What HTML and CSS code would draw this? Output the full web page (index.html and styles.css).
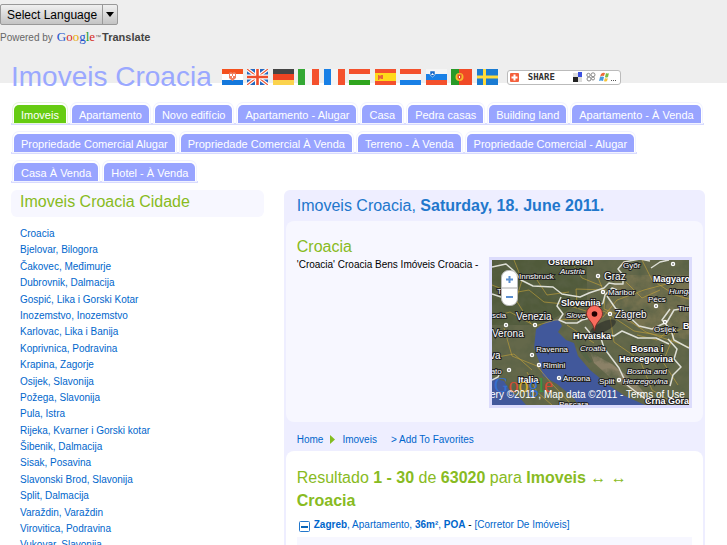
FILE: index.html
```html
<!DOCTYPE html>
<html lang="pt">
<head>
<meta charset="utf-8">
<title>Imoveis Croacia</title>
<link rel="stylesheet" href="styles.css">
</head>
<body>
<div class="translate">
  <button class="lang" type="button"><span class="lang-name">Select Language</span><span class="lang-arrow"><svg width="8" height="5" viewBox="0 0 8 5"><path d="M0 0h8L4 5z"/></svg></span></button>
  <div class="powered"><span>Powered by</span> <span class="google"><i class="gb">G</i><i class="gr">o</i><i class="gy">o</i><i class="gb">g</i><i class="gg">l</i><i class="gr">e</i></span><span class="tm">™</span><b>Translate</b></div>
</div>
<header class="masthead">
  <h1>Imoveis Croacia</h1>
  <div class="flags">
    <svg viewBox="0 0 21 16"><path fill="#fff" d="M0 0h21v16H0z"/><path fill="#f4511e" d="M0 0h21v5H0z"/><path fill="#1478dc" d="M0 11h21v5H0z"/><path fill="#f08060" d="M7 4l2-1 1.500 1L12 3l2 1v5l-3.500 3L7 9z"/><path fill="#fff" d="M8 5h2v2H8zm3 0h2v2h-2zM10 7h1v2h-1z"/></svg>
    <svg viewBox="0 0 21 16"><path fill="#2468c0" d="M0 0h21v16H0z"/><path stroke="#fff" stroke-width="3.500" d="M0 0l21 16M21 0L0 16"/><path stroke="#ee5a38" stroke-width="1.200" d="M0 0l21 16M21 0L0 16"/><path stroke="#fff" stroke-width="5" d="M10.500 0v16M0 8h21"/><path stroke="#ee4c2a" stroke-width="2.600" d="M10.500 0v16M0 8h21"/></svg>
    <svg viewBox="0 0 21 16"><path fill="#444" d="M0 0h21v5H0z"/><path fill="#ee4422" d="M0 5h21v6H0z"/><path fill="#fbd34d" d="M0 11h21v5H0z"/></svg>
    <svg viewBox="0 0 21 16"><path fill="#34a834" d="M0 0h7v16H0z"/><path fill="#f5f5f5" d="M7 0h7v16H7z"/><path fill="#f4512d" d="M14 0h7v16h-7z"/></svg>
    <svg viewBox="0 0 21 16"><path fill="#1980e6" d="M0 0h7v16H0z"/><path fill="#f5f5f5" d="M7 0h7v16H7z"/><path fill="#f4512d" d="M14 0h7v16h-7z"/></svg>
    <svg viewBox="0 0 21 16"><path fill="#f4512d" d="M0 0h21v5H0z"/><path fill="#f5f5f5" d="M0 5h21v6H0z"/><path fill="#2fa51e" d="M0 11h21v5H0z"/></svg>
    <svg viewBox="0 0 21 16"><path fill="#f4512d" d="M0 0h21v16H0z"/><path fill="#ffd91a" d="M0 4h21v8H0z"/><path fill="#e8643c" d="M3 6h1l1 1 1-1h2v4H6L5 9l-1 2H3z"/></svg>
    <svg viewBox="0 0 21 16"><path fill="#f4512d" d="M0 0h21v5H0z"/><path fill="#f5f5f5" d="M0 5h21v6H0z"/><path fill="#1980e6" d="M0 11h21v5H0z"/></svg>
    <svg viewBox="0 0 21 16"><path fill="#f5f5f5" d="M0 0h21v5H0z"/><path fill="#1980e6" d="M0 5h21v6H0z"/><path fill="#f4512d" d="M0 11h21v5H0z"/><path fill="#1668c8" stroke="#fff" stroke-width=".5" d="M4 2h5v4L6.500 8 4 6z"/><path fill="#fff" d="M5 6l1.500-2L8 6z"/></svg>
    <svg viewBox="0 0 21 16"><path fill="#289a28" d="M0 0h8v16H0z"/><path fill="#f04a26" d="M8 0h13v16H8z"/><circle cx="8.500" cy="8" r="4" fill="#f6bd2c"/><path fill="#e64a30" d="M6.500 5.500h4V9l-2 2-2-2z"/><path fill="#fff" d="M8 7h1v2H8z"/></svg>
    <svg viewBox="0 0 21 16"><path fill="#1a7bd2" d="M0 0h21v16H0z"/><path fill="#ffdb3c" d="M6 0h3v16H6z"/><path fill="#ffdb3c" d="M0 6.500h21v3H0z"/></svg>
  </div>
  <a class="share" href="#"><svg width="9" height="9" viewBox="0 0 9 9"><rect width="9" height="9" rx="1" fill="#f4603c"/><path stroke="#fff" stroke-width="2" d="M4.500 1.500v6M1.500 4.500h6"/></svg><span class="share-word">SHARE</span><svg width="44" height="10" viewBox="0 0 44 10"><path fill="#222" d="M0 5h5v5H0z"/><path fill="#ddd" d="M0 1h5v4H0zM5 5h4v5H5z"/><path fill="#3c50e0" d="M5 0h4v5H5z"/><g fill="none" stroke="#888"><circle cx="15.500" cy="3" r="1.700"/><circle cx="20" cy="2.800" r="2"/><circle cx="16" cy="7" r="2"/><circle cx="20" cy="6.500" r="1.500"/></g><path fill="#ee6a3a" d="M28 2q2-2 4-1l-1 3q-2-1-4 1z"/><path fill="#7dbc42" d="M33 1q2 1 3 0l-1 4q-2 1-3 0z"/><path fill="#469ade" d="M27 5q2-1 4 0l-1 4q-2-1-4 0z"/><path fill="#f4c33a" d="M32 6q2 1 3 0l-1 3q-2 1-3 0z"/><path fill="#555" d="M38 8h1v1h-1zm2 0h1v1h-1zm2 0h1v1h-1z"/></svg></a>
</header>
<nav class="tabs">
  <a class="on" href="#"><span>Imoveis</span></a>
  <a href="#"><span>Apartamento</span></a>
  <a href="#"><span>Novo edifício</span></a>
  <a href="#"><span>Apartamento - Alugar</span></a>
  <a href="#"><span>Casa</span></a>
  <a href="#"><span>Pedra casas</span></a>
  <a href="#"><span>Building land</span></a>
  <a href="#"><span>Apartamento - À Venda</span></a>
  <a href="#"><span>Propriedade Comercial Alugar</span></a>
  <a href="#"><span>Propriedade Comercial À Venda</span></a>
  <a href="#"><span>Terreno - À Venda</span></a>
  <a href="#"><span>Propriedade Comercial - Alugar</span></a>
  <a href="#"><span>Casa À Venda</span></a>
  <a href="#"><span>Hotel - À Venda</span></a>
</nav>
<div class="columns">
  <aside>
    <h2 class="side-title">Imoveis Croacia Cidade</h2>
    <ul class="cities">
      <li><a href="#">Croacia</a></li>
      <li><a href="#">Bjelovar, Bilogora</a></li>
      <li><a href="#">Čakovec, Međimurje</a></li>
      <li><a href="#">Dubrovnik, Dalmacija</a></li>
      <li><a href="#">Gospić, Lika i Gorski Kotar</a></li>
      <li><a href="#">Inozemstvo, Inozemstvo</a></li>
      <li><a href="#">Karlovac, Lika i Banija</a></li>
      <li><a href="#">Koprivnica, Podravina</a></li>
      <li><a href="#">Krapina, Zagorje</a></li>
      <li><a href="#">Osijek, Slavonija</a></li>
      <li><a href="#">Požega, Slavonija</a></li>
      <li><a href="#">Pula, Istra</a></li>
      <li><a href="#">Rijeka, Kvarner i Gorski kotar</a></li>
      <li><a href="#">Šibenik, Dalmacija</a></li>
      <li><a href="#">Sisak, Posavina</a></li>
      <li><a href="#">Slavonski Brod, Slavonija</a></li>
      <li><a href="#">Split, Dalmacija</a></li>
      <li><a href="#">Varaždin, Varaždin</a></li>
      <li><a href="#">Virovitica, Podravina</a></li>
      <li><a href="#">Vukovar, Slavonija</a></li>
    </ul>
  </aside>
  <main>
    <h2 class="date">Imoveis Croacia, <b>Saturday, 18. June 2011.</b></h2>
    <section class="intro">
      <div class="intro-text">
        <h3>Croacia</h3>
        <p>'Croacia' Croacia Bens Imóveis Croacia -</p>
      </div>
      <svg class="map" viewBox="0 0 197 145">
        <defs>
          <filter id="terrain" x="0" y="0" width="100%" height="100%"><feTurbulence type="fractalNoise" baseFrequency=".09" numOctaves="4" seed="8"/><feColorMatrix values="0 0 0 0 .1  0 0 0 0 .12  0 0 0 0 .06  1.800 0 0 0 -.6"/></filter>
          <clipPath id="frame"><path d="M0 0h197v145H0z"/></clipPath>
        </defs>
        <g clip-path="url(#frame)">
          <path fill="#64684a" d="M0 0h197v145H0z"/>
          <path fill="#777350" d="M125 15l72 0v65l-40-8-45-20z"/>
          <path fill="#505a3a" d="M0 0h95v40l-45 25H0z"/>
          <path fill="#8b8167" d="M98 92l22 12 25 20 12 15-35-18-20-18z"/>
          <path filter="url(#terrain)" d="M0 0h197v145H0z"/>
          <path fill="#41589b" d="M44 69l10-7 12-3 4 7-4 6 8 8 8 3 4 13 12 14 17 14 18 12 20 9v10H93l-12-18-16-13-14-8-4-15-5-13z"/>
          <path fill="#566547" d="M82 74l4 5 9 15 5 8-3 1-10-12z"/>
          <path fill="#41589b" d="M0 118l12 3 6 10 10 7 6 7H0z"/>
          <g fill="none" stroke="#c2a13a" stroke-width=".8" opacity=".8"><path d="M0 25l20 8 17-3 15 12 20 2 25 8 14 5 14-17 27-10 45-12M0 57l18-5 25 14 20-6 27-1 22-8 30 20 30 5 25-10M105 15l8 20-1 14 20 8 22 15 43 15M12 68l8 28 25 10 15 18 20 21M22 0l8 20-6 20 15 24M0 98l22-4 18 16M150 0l10 20 23 15 14 4M78 0l12 18 20 8M118 57l4 25 26 18 12 30 20 12M75 65l15 10 12 8M183 72l-12 30 15 23M45 20l10 15 22-3M85 44l-1-15 30 1M134 22l16 16 18-8M145 75l20 5 15-12M35 112l10 20 15 13"/></g>
          <g fill="none" stroke="#dedfd6" stroke-width="1.500" stroke-linejoin="round"><path d="M0 7l14-3 8 7 7 9 12 6 20 1 9 7 18 3 9-4 15-5 5-5 6 1 8 0 0-9-5-6 6-7 16-3 10 2"/><path d="M69 37l-4 9 6 8-4 6 7 3 11 0 5-3 8-2 5-8 8-7 2-8 7-7 5 2M115 36l9 13 7 2 16 15 13 3 15-7 7-12 15-2"/><path d="M93 67l5 6 10 3 6-2 8 2 8-5 16 7 18 0 13 6M108 75l4 13 15 20 8 17 21 16 11 4M176 79l9 10-3 10 7 8-8 8-3 11M159 8l9-6 9-2M178 49l-8 11 9 10 3 10 15 8M0 34l12 4 2-8 8-3M0 120l6-3 3-7"/></g>
          <g fill="#222" stroke="#fff" stroke-width="1.500"><circle cx="106" cy="16" r="1.500"/><circle cx="111" cy="32" r="1.500"/><circle cx="118" cy="54" r="1.500"/><circle cx="43" cy="65" r="1.500"/><circle cx="14" cy="65" r="1.500"/><circle cx="40" cy="95" r="1.500"/><circle cx="47" cy="105" r="1.500"/><circle cx="67" cy="118" r="1.500"/><circle cx="127" cy="120" r="1.500"/><circle cx="17" cy="110" r="1.500"/><circle cx="173" cy="62" r="1.500"/><circle cx="164" cy="46" r="1.500"/><circle cx="181" cy="4" r="1.500"/></g>
          <g class="label">
            <text class="big" x="56" y="5">Österreich</text><text class="it" x="68" y="14">Austria</text><text x="131" y="8">Győr</text><text x="27" y="19">Innsbruck</text><text class="mid" x="112" y="20">Graz</text><text class="big" x="161" y="22">Magyarország</text><text class="it" x="177" y="34">Hungary</text><text x="116" y="35">Maribor</text><text x="156" y="42">Pécs</text><text class="big" x="69" y="46">Slovenija</text><text class="it" x="74" y="58">Slove</text><text class="mid" x="123" y="58">Zagreb</text><text x="186" y="51">Timiș</text><text class="mid" x="24" y="60">Venezia</text><text class="mid" x="0" y="77">Verona</text><text x="162" y="72">Osijek</text><text class="big" x="191" y="69">B</text><text class="big" x="81" y="79">Hrvatska</text><text class="it" x="88" y="91">Croatia</text><text x="44" y="92">Ravenna</text><text class="big" x="139" y="92">Bosna i</text><text class="big" x="127" y="102">Hercegovina</text><text x="51" y="108">Rimini</text><text class="it" x="135" y="114">Bosnia and</text><text class="it" x="131" y="124">Herzegovina</text><text x="71" y="121">Ancona</text><text x="107" y="124">Split</text><text class="big" x="26" y="123">Italia</text><text x="67" y="147">Pescara</text><text class="big" x="153" y="144">Crna Gora</text><text x="0" y="58">scia</text><text class="mid" x="-2" y="99">va</text><text x="-4" y="114">rato</text><text x="5" y="34">To</text>
          </g>
          <text class="logo" x="2" y="132"><tspan fill="#356ed0">G</tspan><tspan fill="#d34c33">o</tspan><tspan fill="#d6ac27">o</tspan><tspan fill="#356ed0">g</tspan><tspan fill="#3b9741">l</tspan><tspan fill="#d34c33">e</tspan></text>
          <text class="credit" x="-2" y="138">ery ©2011 , Map data ©2011 - Terms of Use</text>
          <rect x="9.500" y="10.500" width="16" height="35" rx="7" fill="#fff" stroke="#bbb"/><path stroke="#aaa" d="M10 28h15"/><path stroke="#5b8fd0" stroke-width="2" d="M14 19.500h7M17.500 16v7M14 37h7"/>
          <ellipse cx="111" cy="67" rx="14" ry="5" fill="#222" opacity=".55" transform="rotate(-25 111 67)"/>
          <path fill="#f96b5d" stroke="#6e251f" stroke-width=".8" d="M102.500 71c-1-10-8-11-8-17.500a8 8 0 0 1 16 0c0 6.500-7 7.500-8 17.500z"/><circle cx="102.500" cy="54" r="2.800" fill="#200"/>
        </g>
      </svg>
    </section>
    <nav class="crumbs"><a href="#">Home</a><svg width="5" height="9" viewBox="0 0 5 9"><path fill="#84bd20" d="M0 0l5 4.500L0 9z"/></svg><a href="#">Imoveis</a><a class="fav" href="#">&gt; Add To Favorites</a></nav>
    <section class="results">
      <h3>Resultado <b>1 - 30</b> de <b>63020</b> para <b>Imoveis ↔ ↔<br>Croacia</b></h3>
      <div class="result"><svg width="11" height="11" viewBox="0 0 11 11"><rect x=".5" y=".5" width="10" height="10" rx="1" fill="#fff" stroke="#2277cc"/><path stroke="#0864b8" stroke-width="2" d="M2 6h7"/></svg><p><a href="#"><b>Zagreb</b>, Apartamento, <b>36m²</b>, <b>POA</b></a> - <a href="#">[Corretor De Imóveis]</a></p></div>
      <div class="result-body"></div>
    </section>
  </main>
</div>
</body>
</html>
```
FILE: styles.css
```css
* { box-sizing: border-box; }

body {
  margin: 0;
  height: 100vh;
  overflow: hidden;
  background: linear-gradient(#eee, #eee) 0 0 / 100% 83px no-repeat #fff;
  font-family: "Liberation Sans", Arial, sans-serif;
  font-size: 10px;
  color: #000;
}

a { color: #06c; text-decoration: none; }
h1, h2, h3, p, ul { margin: 0; padding: 0; font-weight: normal; }

/* language picker */
.translate { padding-top: 4px; height: 60px; }
.lang {
  display: flex;
  align-items: stretch;
  height: 21px;
  padding: 0;
  border: 1px solid #999;
  border-radius: 2px;
  background: linear-gradient(#f0f0f0, #c4c4c4);
  font: 12px "Liberation Sans", Arial, sans-serif;
  color: #000;
}
.lang-name { display: flex; align-items: center; padding: 0 5px 0 6px; }
.lang-arrow { display: flex; align-items: center; padding: 0 3px; border-left: 1px solid #999; }
.powered { display: flex; align-items: center; height: 24px; color: #666; }
.powered b { font-size: 11px; color: #444; }
.google { margin-left: 4px; font: 13px "Liberation Serif", serif; -webkit-text-stroke: 0; }
.google i { font-style: normal; }
.gb { color: #2255cc; }
.gr { color: #d62a1c; }
.gy { color: #e8a800; }
.gg { color: #159a30; }
.tm { font-size: 6px; padding-right: 1px; }

/* title line */
.masthead { display: flex; align-items: center; padding-left: 11px; height: 34px; }
.masthead h1 { font-size: 28px; line-height: 32px; color: #9aa8ff; }
.flags { display: flex; justify-content: space-between; width: 276px; margin-left: 10px; }
.flags svg { width: 21px; height: 16px; }
.share {
  display: flex;
  align-items: center;
  height: 15px;
  margin-left: 9px;
  padding: 0 3px 0 2px;
  border: 1px solid #bbb;
  border-radius: 3px;
  background: #fff;
}
.share-word { padding: 0 18px 0 9px; font: bold 9px "DejaVu Sans Mono", monospace; color: #333; }

/* tabs */
.tabs { display: flex; flex-wrap: wrap; row-gap: 9px; padding: 11px 11px 0; }
.tabs a {
  padding: 0 3px;
  border-bottom: 2px solid #d8dbff;
  font-size: 11px;
  line-height: 20px;
  color: #fff;
}
.tabs span {
  display: block;
  height: 18px;
  padding: 0 7px;
  border-radius: 5px 5px 0 0;
  background: #98a4ff;
  box-shadow: 0 -1px 0 1px #fff, 0 -1px 0 2px #f2f3ff;
}
.tabs .on span { background: #66cc11; box-shadow: 0 -1px 0 1px #fff, 0 -1px 0 2px #e8f6dc; }

/* columns */
.columns {
  display: grid;
  grid-template-columns: 3fr 5fr;
  gap: 20px;
  padding: 7px 22px 0 11px;
}
.side-title {
  height: 27px;
  padding-left: 9px;
  border-radius: 6px;
  background: #f7f7ff;
  font-size: 16px;
  line-height: 23px;
  color: #88bb22;
}
.cities { padding: 9px 9px; list-style: none; line-height: 1.64; }

main { background: #eef; border-radius: 6px; padding: 0 2px; }
.date { padding-left: 11px; font-size: 16px; line-height: 31px; color: #2277cc; }
.intro {
  display: flex;
  justify-content: space-between;
  height: 201px;
  padding: 16px 11px 0;
  border-radius: 8px;
  background: #f7f7ff;
}
.intro h3 { font-size: 16px; line-height: 20px; color: #88bb22; }
.intro p { line-height: 16px; }
.map {
  box-sizing: content-box;
  flex: none;
  width: 197px;
  height: 145px;
  margin-top: 20px;
  border: 3px solid #dcdcfc;
}
.label text { font-size: 8px; fill: #fff; stroke: #222; stroke-width: 2px; paint-order: stroke; }
.label .mid { font-size: 10px; }
.label .big { font-size: 9px; font-weight: bold; }
.label .it { font-style: italic; }
.logo { font: 20px "Liberation Serif", serif; }
.credit { font-size: 10px; fill: #fff; }

.crumbs { display: flex; align-items: center; height: 29px; padding: 5px 11px 0; }
.crumbs svg { margin: 0 7px; }
.fav { margin-left: 14px; }

.results { padding: 15px 11px 0; border-radius: 8px 8px 0 0; background: #fff; }
.results h3 { font-size: 16px; line-height: 23px; color: #88bb22; }
.result { display: flex; align-items: center; gap: 4px; height: 25px; }
.result svg { margin: 4px 0 0 2px; }
.result-body { height: 20px; background: #f7f7ff; }
```
